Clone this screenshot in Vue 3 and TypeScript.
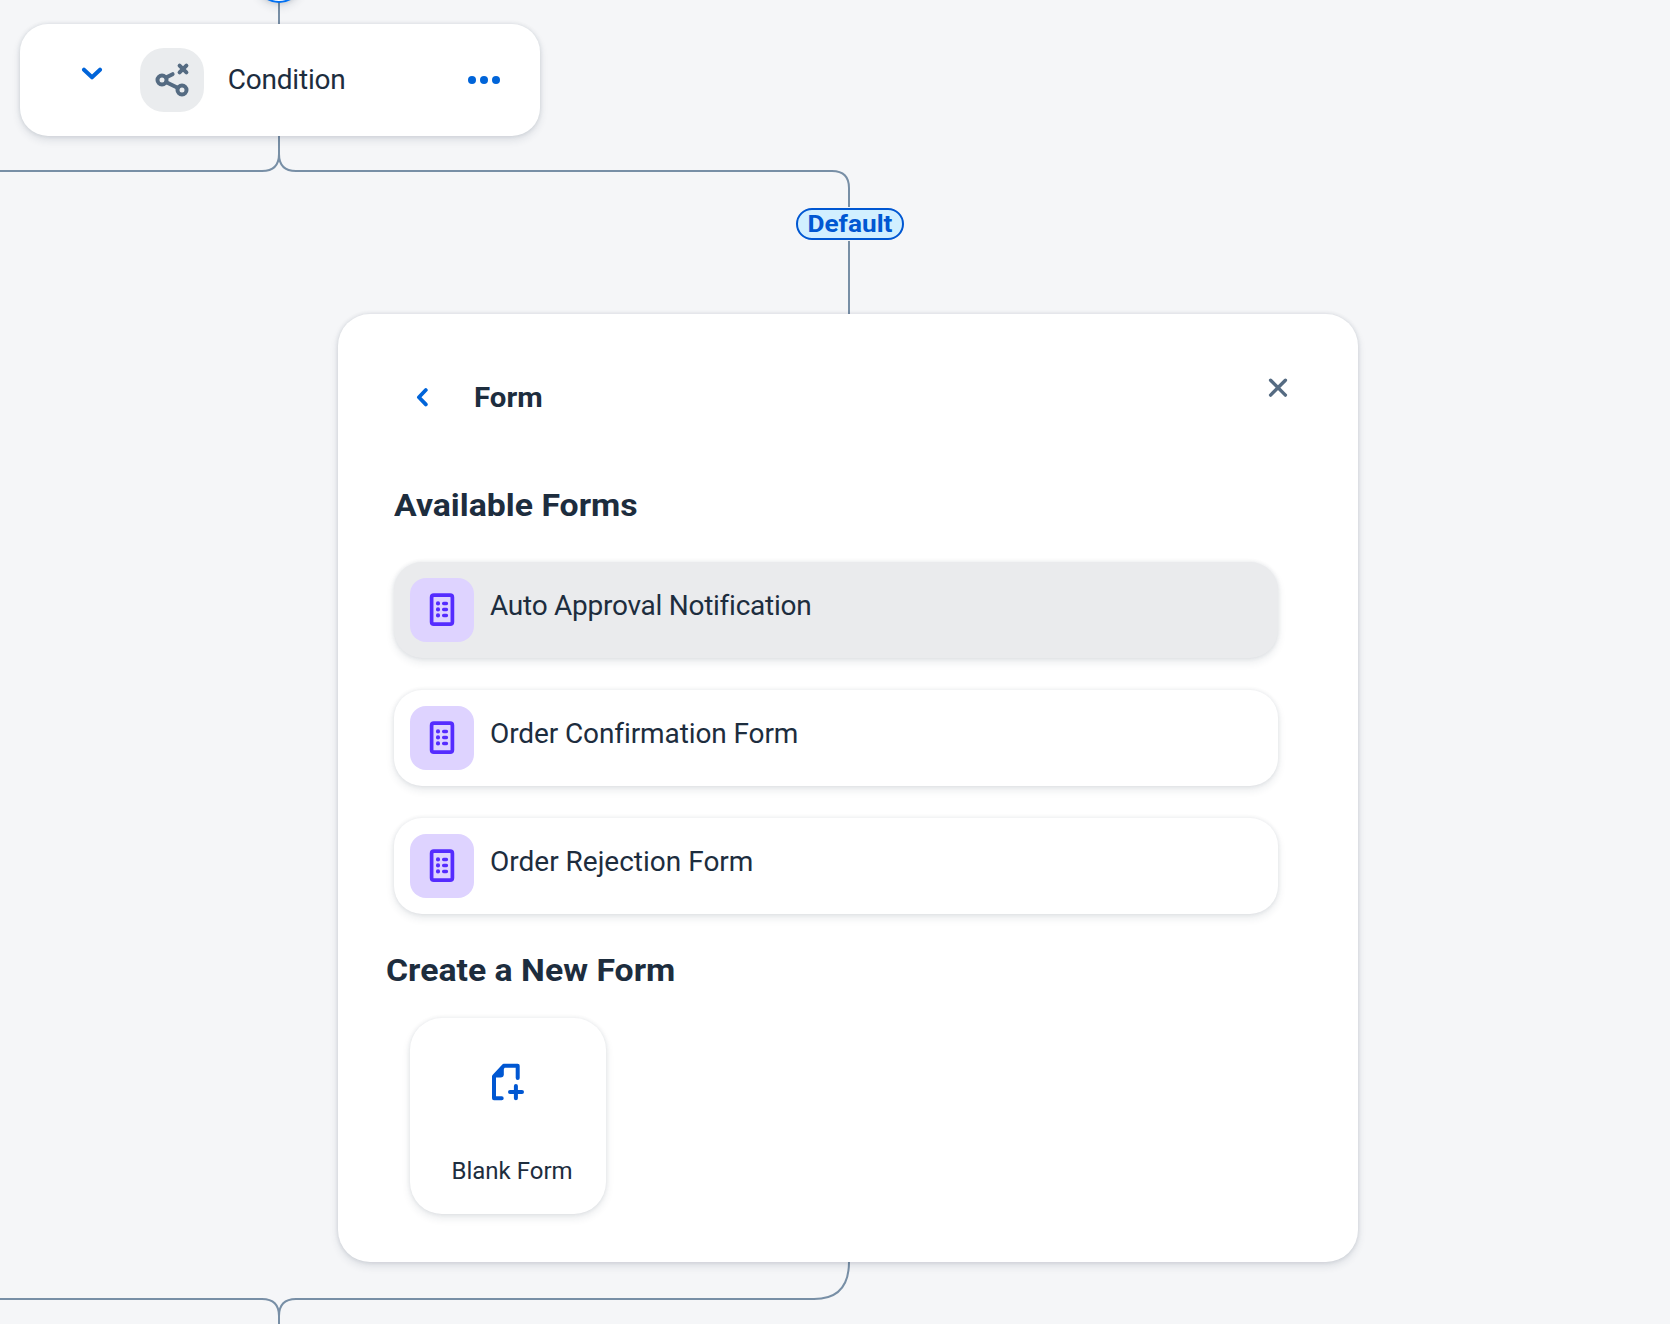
<script setup lang="ts">
interface FormEntry {
  id: string
  name: string
  active?: boolean
}

const forms: FormEntry[] = [
  { id: 'auto', name: 'Auto Approval Notification', active: true },
  { id: 'confirm', name: 'Order Confirmation Form' },
  { id: 'reject', name: 'Order Rejection Form' },
]
</script>

<template>
  <div class="canvas">
    <svg class="edges" width="1670" height="1324" viewBox="0 0 1670 1324">
      <path d="M279 0V24" />
      <path d="M279 136V154Q279 171 262 171H0" />
      <path d="M279 136V154Q279 171 296 171H832Q849 171 849 188V207" />
      <path d="M849 241V314" />
      <path d="M849 1262Q849 1299 814 1299H296Q279 1299 279 1316V1324" />
      <path d="M0 1299H262Q279 1299 279 1316" />
    </svg>

    <div class="add-node"></div>

    <section class="condition">
      <svg class="chevron" width="22" height="14" viewBox="0 0 22 14">
        <path d="M3 2.7 11 10.3 19 2.7" />
      </svg>
      <div class="condition-icon">
        <svg width="64" height="64" viewBox="0 0 64 64">
          <circle cx="22" cy="32" r="4.5" />
          <circle cx="42" cy="42" r="4.5" />
          <path d="M26.5 29.3 32.6 26.2M26.3 34.2 37.6 39.8M39.6 17.6 46.4 24.4M46.4 17.6 39.6 24.4" />
        </svg>
      </div>
      <span class="condition-title">Condition</span>
      <span class="more"><i></i><i></i><i></i></span>
    </section>

    <div class="badge"><span>Default</span></div>

    <section class="panel">
      <header class="panel-head">
        <svg class="back" width="14" height="20" viewBox="0 0 14 20">
          <path d="M10.8 3 3.9 10.2 10.8 17.4" />
        </svg>
        <h1>Form</h1>
        <svg class="close" width="20" height="20" viewBox="0 0 20 20">
          <path d="M2.6 2.3 17.4 17.1M17.4 2.3 2.6 17.1" />
        </svg>
      </header>

      <h2 class="available">Available Forms</h2>
      <ul class="rows">
        <li v-for="form in forms" :key="form.id" class="row" :class="[form.id, { active: form.active }]">
          <div class="tile">
            <svg width="64" height="64" viewBox="0 0 64 64">
              <rect x="21.6" y="17.2" width="20.8" height="29" rx="2.2" />
              <path d="M28 25.4h.01M28 31.4h.01M28 37.4h.01" class="dot" />
              <path d="M33.7 25.4h2.7M33.7 31.4h2.7M33.7 37.4h2.7" class="dash" />
            </svg>
          </div>
          <span>{{ form.name }}</span>
        </li>
      </ul>

      <h2 class="create">Create a New Form</h2>
      <div class="blank">
        <svg width="36" height="40" viewBox="0 0 36 40">
          <path d="M11.7 36.2H4V14.4L13.8 3.8H27.7V16" />
          <path class="fold" d="M3 14 13 3 13.8 4V12.3Q13.8 15.6 10.5 15.6H3Z" />
          <path d="M25.9 24.1V36.3M20 30.1H32" />
        </svg>
        <span>Blank Form</span>
      </div>
    </section>
  </div>
</template>

<style>
body {
  margin: 0;
  background: #f5f6f8;
}
</style>

<style scoped>
.canvas {
  position: relative;
  width: 1670px;
  height: 1324px;
  overflow: hidden;
  background: #f5f6f8;
  color: #1d2d3e;
  font-family: Roboto, "Noto Sans", sans-serif;
}
svg {
  display: block;
  fill: none;
  stroke-linecap: round;
  stroke-linejoin: round;
}
h1,
h2,
ul {
  margin: 0;
  padding: 0;
}
.edges {
  position: absolute;
  inset: 0;
  stroke: #788fa6;
  stroke-width: 2;
  stroke-linecap: butt;
}
.add-node {
  position: absolute;
  left: 255px;
  top: -45px;
  width: 44px;
  height: 44px;
  border: 2px solid #0070f2;
  border-radius: 50%;
  background: #fff;
  box-shadow: 0 0 4px rgba(34, 53, 72, 0.16), 0 4px 8px rgba(34, 53, 72, 0.12);
}
.condition {
  position: absolute;
  left: 20px;
  top: 24px;
  box-sizing: border-box;
  width: 520px;
  height: 112px;
  padding: 0 39.8px 0 61px;
  display: flex;
  align-items: center;
  border-radius: 28px;
  background: #fff;
  box-shadow: 0 0 4px rgba(34, 53, 72, 0.13), 0 4px 8px rgba(34, 53, 72, 0.12);
}
.chevron {
  margin-top: -12px;
  stroke: #0064d9;
  stroke-width: 4;
}
.condition-icon {
  width: 64px;
  height: 64px;
  margin-left: 37px;
  border-radius: 24px;
  background: #eaecee;
}
.condition-icon svg {
  stroke: #556b82;
  stroke-width: 4;
}
.condition-title {
  margin-left: 23.7px;
  font-size: 28px;
  line-height: 36px;
  letter-spacing: -0.2px;
}
.more {
  display: flex;
  gap: 3.6px;
  margin: -0.5px 0 0 auto;
}
.more i {
  width: 8.5px;
  height: 8.5px;
  border-radius: 50%;
  background: #0064d9;
}
.badge {
  position: absolute;
  left: 796px;
  top: 208px;
  box-sizing: border-box;
  width: 108px;
  height: 32px;
  border: 2px solid #0057d2;
  border-radius: 16px;
  background: #d1efff;
  color: #0057d2;
  font-size: 24px;
  font-weight: 700;
  line-height: 29px;
  text-align: center;
  white-space: nowrap;
}
.badge span {
  display: inline-block;
  transform: scaleX(1.09);
}
.panel {
  position: absolute;
  left: 338px;
  top: 314px;
  box-sizing: border-box;
  width: 1020px;
  height: 948px;
  padding: 64px 80px 0 56px;
  border-radius: 32px;
  background: #fff;
  box-shadow: 0 0 4px rgba(34, 53, 72, 0.14), 0 4px 8px rgba(34, 53, 72, 0.12);
}
.panel-head {
  display: flex;
  align-items: flex-start;
  height: 84px;
}
.back {
  margin: 9px 0 0 21px;
  stroke: #0064d9;
  stroke-width: 3.8;
}
h1 {
  margin-left: 44.6px;
  font-size: 28px;
  line-height: 39px;
  transform: scaleX(1.05);
  transform-origin: left;
}
.close {
  margin: 0 -10px 0 auto;
  stroke: #556b82;
  stroke-width: 3.4;
}
h2 {
  width: max-content;
  font-size: 32px;
  line-height: 44px;
  white-space: nowrap;
  transform: scaleX(1.056);
  transform-origin: left;
}
.available {
  margin-top: 21px;
}
.rows {
  display: flex;
  flex-direction: column;
  gap: 32px;
  margin-top: 35px;
  list-style: none;
}
.row {
  display: flex;
  box-sizing: border-box;
  height: 96px;
  padding: 16px;
  border-radius: 28px;
  background: #fff;
  font-size: 28px;
  line-height: 36px;
  white-space: nowrap;
  box-shadow: 0 0 4px rgba(34, 53, 72, 0.1), 0 4px 8px rgba(34, 53, 72, 0.1);
}
.row.active {
  background: #eaebed;
}
.row span {
  margin: 10px 0 0 16px;
}
.row.auto span {
  letter-spacing: -0.26px;
}
.row.confirm span {
  letter-spacing: -0.1px;
}
.tile {
  width: 64px;
  height: 64px;
  border-radius: 16px;
  background: #ded3ff;
}
.tile svg {
  stroke: #552cff;
  stroke-width: 3.7;
}
.tile .dot {
  stroke-width: 4.2;
}
.tile .dash {
  stroke-width: 3.5;
}
.create {
  margin: 34px 0 0 -8px;
}
.blank {
  display: flex;
  flex-direction: column;
  box-sizing: border-box;
  width: 196px;
  height: 196px;
  margin: 26px 0 0 16px;
  padding: 44px 0 0 80px;
  border-radius: 32px;
  background: #fff;
  box-shadow: 0 0 4px rgba(34, 53, 72, 0.1), 0 4px 8px rgba(34, 53, 72, 0.1);
}
.blank svg {
  stroke: #0057d2;
  stroke-width: 4;
}
.blank .fold {
  fill: #0057d2;
  stroke: none;
}
.blank span {
  margin: 54px 0 0 -38.5px;
  font-size: 24px;
  line-height: 31px;
  white-space: nowrap;
}
</style>
